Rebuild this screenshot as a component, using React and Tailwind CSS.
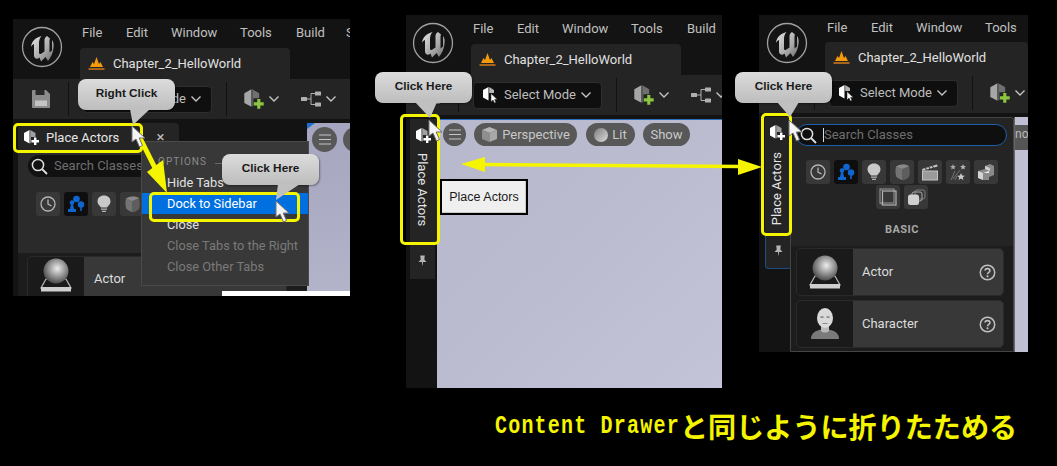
import React from "react";

const Chevron = ({ className = "" }) => (
  <svg width="12" height="8" viewBox="0 0 12 8" className={`shrink-0 ${className}`}>
    <path d="M1.5 1.5 L6 6 L10.5 1.5" fill="none" stroke="#c4c4c4" strokeWidth="1.4" />
  </svg>
);

const Logo = () => (
  <svg width="42" height="42" viewBox="0 0 42 42">
    <defs>
      <linearGradient id="ug" x1="0" y1="0" x2="1" y2="1">
        <stop offset="0" stopColor="#e4e4e4" />
        <stop offset="0.6" stopColor="#a8a8a8" />
        <stop offset="1" stopColor="#6a6a6a" />
      </linearGradient>
    </defs>
    <circle cx="21" cy="21" r="19.5" fill="#141414" stroke="#a0a0a0" strokeWidth="1.3" />
    <path
      d="M10 21 C10.5 15 15 11.5 20.5 10 C18.5 12.5 18 14.5 18 17 L18 26.5 C18 28 19 28.5 20.5 27.5 L23.5 25.5 L23.5 14 C23.5 12 24.5 11 26 10 L29 12.5 L28.5 14 L28.5 26.5 L31 24.5 L31 14 C32.5 16 33 18 32.5 22 C32 27 30 31 27 35 L24.5 31 L20 35.5 L18.5 31.5 C16 34 13.5 32.5 13 30 L13 18 C11.5 18.5 10.5 19.5 10 21 Z"
      fill="url(#ug)"
    />
  </svg>
);

const Flame = () => (
  <svg width="17" height="15" viewBox="0 0 17 15" className="shrink-0">
    <path d="M2 11 L4.5 6 L6 8 L8.5 1 L11 8 L12.5 6 L15 11 Z" fill="#f59a0c" />
    <rect x="0.5" y="12" width="16" height="2" fill="#a8641a" />
  </svg>
);

const PlaceIcon = ({ green = false, size = 17 }) => (
  <svg width={size} height={size} viewBox="0 0 17 17" className="shrink-0">
    <path d="M1 4 L6.5 1 L6.5 14.5 L1 11.5 Z" fill={green ? "#a6a6a6" : "#ffffff"} />
    <path d="M7.2 1 L12.5 4 L12.5 8 L8 8 L8 14 L7.2 14.5 Z" fill={green ? "#707070" : "#a0a0a0"} />
    <path d="M11 8.5 h2.4 v2.6 h2.6 v2.4 h-2.6 v2.6 h-2.4 v-2.6 h-2.6 v-2.4 h2.6 Z" fill={green ? "#8cc63f" : "#ffffff"} />
  </svg>
);

const SelectIcon = () => (
  <svg width="17" height="18" viewBox="0 0 17 18" className="shrink-0">
    <path d="M1 4 L6.5 1 L6.5 14.5 L1 11.5 Z" fill="#ffffff" />
    <path d="M7.2 1 L12 4 L12 7 L7.2 7 Z" fill="#b5b5b5" />
    <path d="M9 7.5 L9 16 L11 14 L12.5 17 L14 16.3 L12.6 13.5 L15.2 13.5 Z" fill="#ffffff" stroke="#222" strokeWidth="0.5" />
  </svg>
);

const BlueprintIcon = () => (
  <svg width="21" height="16" viewBox="0 0 21 16" className="shrink-0">
    <rect x="0" y="6" width="6" height="4" rx="0.6" fill="#b0b0b0" />
    <rect x="14" y="0.5" width="6" height="4" rx="0.6" fill="#b0b0b0" />
    <rect x="14" y="11.5" width="6" height="4" rx="0.6" fill="#b0b0b0" />
    <path d="M6 8 H10 M14 2.5 H10 V13.5 H14" fill="none" stroke="#b0b0b0" strokeWidth="1" />
  </svg>
);

const SaveIcon = () => (
  <svg width="18" height="18" viewBox="0 0 18 18" className="shrink-0">
    <path d="M0 1 Q0 0 1 0 H14 L18 4 V17 Q18 18 17 18 H1 Q0 18 0 17 Z" fill="#8c8c8c" />
    <rect x="3.5" y="0" width="9" height="5" fill="#2a2a2a" />
    <rect x="3" y="10.5" width="12" height="5.5" fill="#c4c4c4" />
  </svg>
);

const Hamburger = () => (
  <svg width="12" height="11" viewBox="0 0 12 11">
    <path d="M0 1 H12 M0 5.5 H12 M0 10 H12" stroke="#c4c4c4" strokeWidth="1.1" />
  </svg>
);

const SearchIcon = () => (
  <svg width="17" height="17" viewBox="0 0 17 17" className="shrink-0">
    <circle cx="7" cy="7" r="5.6" fill="none" stroke="#e0e0e0" strokeWidth="1.5" />
    <path d="M11 11 L16 16" stroke="#e0e0e0" strokeWidth="1.8" />
  </svg>
);

const HelpIcon = () => (
  <svg width="17" height="17" viewBox="0 0 16 16" className="shrink-0">
    <circle cx="8" cy="8" r="6.8" fill="none" stroke="#c0c0c0" strokeWidth="1.4" />
    <path d="M5.7 6.2 C5.8 3.7 10.3 3.7 10.3 6.3 C10.3 8 8 7.8 8 9.6" fill="none" stroke="#c0c0c0" strokeWidth="1.5" />
    <circle cx="8" cy="11.6" r="1" fill="#c0c0c0" />
  </svg>
);

const Pin = () => (
  <svg width="9" height="12" viewBox="0 0 9 12">
    <path d="M2.2 0.5 H6.8 L6.3 4.5 L8.5 7 H5.1 L4.5 11.5 L3.9 7 H0.5 L2.7 4.5 Z" fill="#b4b4b4" />
  </svg>
);

const Sphere = () => (
  <svg width="32" height="34" viewBox="0 0 32 34">
    <defs>
      <radialGradient id="sph" cx="0.55" cy="0.4" r="0.6">
        <stop offset="0" stopColor="#ededed" />
        <stop offset="0.5" stopColor="#9d9d9d" />
        <stop offset="1" stopColor="#4c4c4c" />
      </radialGradient>
    </defs>
    <path d="M6 21 L1 30 H31 L26 21 Z" fill="none" stroke="#b9b9b9" strokeWidth="1.2" />
    <rect x="1" y="29" width="30" height="4.5" fill="#cfcfcf" />
    <circle cx="16" cy="13" r="12.5" fill="url(#sph)" />
  </svg>
);

const Person = () => (
  <svg width="30" height="32" viewBox="0 0 30 32">
    <path d="M1 31 C1 24 7 22.5 11 21.5 H19 C23 22.5 29 24 29 31 Z" fill="#7a7a7a" />
    <path d="M11 17 H19 V23 C17 25 13 25 11 23 Z" fill="#b8b8b8" />
    <ellipse cx="15" cy="10" rx="8" ry="10" fill="#d9d9d9" />
    <rect x="10.5" y="8.5" width="3" height="1.2" fill="#666" />
    <rect x="16.5" y="8.5" width="3" height="1.2" fill="#666" />
    <rect x="12.5" y="15" width="5" height="1" fill="#888" />
  </svg>
);

const paletteGlyph = {
  clock: (
    <svg width="16" height="16" viewBox="0 0 16 16">
      <circle cx="8" cy="8" r="7" fill="none" stroke="#b5b5b5" strokeWidth="1.3" />
      <path d="M8 3.5 V8 L11.5 10" fill="none" stroke="#b5b5b5" strokeWidth="1.3" />
    </svg>
  ),
  actors: (
    <svg width="18" height="18" viewBox="0 0 18 18">
      <circle cx="9.5" cy="4" r="3.3" fill="#0f66d0" />
      <circle cx="14" cy="9.5" r="3.2" fill="#0f66d0" />
      <path d="M14 12 V16" stroke="#0f66d0" strokeWidth="1.6" />
      <circle cx="5" cy="7.5" r="2.3" fill="#0f66d0" />
      <path d="M4 9 H6 L7 14 H9 V17 H1 V14 H3 Z" fill="#0f66d0" />
    </svg>
  ),
  light: (
    <svg width="14" height="18" viewBox="0 0 14 18">
      <path d="M7 0.5 C11 0.5 13.5 3 13.5 6.5 C13.5 9 11.5 10.5 10 12.5 H4 C2.5 10.5 0.5 9 0.5 6.5 C0.5 3 3 0.5 7 0.5 Z" fill="#c9c9c9" />
      <rect x="4" y="13.5" width="6" height="1.3" fill="#b0b0b0" />
      <rect x="5" y="15.7" width="4" height="1.3" fill="#b0b0b0" />
    </svg>
  ),
  cube: (
    <svg width="17" height="18" viewBox="0 0 17 18">
      <path d="M2 3.5 Q8 0 15 3 Q16.5 10 15 14 Q10 18 8 17 Q3 15 2 13 Q1 8 2 3.5 Z" fill="#5e5e5e" />
      <path d="M2 3.5 Q8 0 15 3 L8 6 Z" fill="#8a8a8a" />
      <path d="M2 3.5 L8 6 V17 Q3 15 2 13 Q1 8 2 3.5 Z" fill="#737373" />
    </svg>
  ),
  film: (
    <svg width="18" height="18" viewBox="0 0 18 18">
      <rect x="1.5" y="8" width="15" height="9" fill="#9a9a9a" stroke="#c4c4c4" strokeWidth="1" />
      <path d="M1 6 L16 1.5 L16.7 3.4 L1.5 7.8 Z" fill="#c4c4c4" />
      <path d="M4.5 5 L5.4 7 M8 4 L8.9 6 M11.5 3 L12.4 5" stroke="#333" strokeWidth="1" />
    </svg>
  ),
  stars: (
    <svg width="18" height="18" viewBox="0 0 18 18">
      <path d="M12 10 L13.1 12.4 L15.8 12.7 L13.8 14.4 L14.4 17 L12 15.6 L9.6 17 L10.2 14.4 L8.2 12.7 L10.9 12.4 Z" fill="#c9c9c9" />
      <path d="M4 1 L4.8 3 L7 3.2 L5.3 4.5 L5.8 6.6 L4 5.5 L2.2 6.6 L2.7 4.5 L1 3.2 L3.2 3 Z" fill="#a8a8a8" />
      <path d="M14 1 L14.8 3 L17 3.2 L15.3 4.5 L15.8 6.6 L14 5.5 L12.2 6.6 L12.7 4.5 L11 3.2 L13.2 3 Z" fill="#b8b8b8" />
      <path d="M2 17 L6 8 M4 16 L11 7 M6 17 L8 13" stroke="#7a7a7a" strokeWidth="0.9" />
    </svg>
  ),
  shapes: (
    <svg width="18" height="18" viewBox="0 0 18 18">
      <path d="M8 3 L13 1 L17 3 V12 L12 14 V17 H6 L1 15 V8 L8 6 Z" fill="#8a8a8a" />
      <path d="M1 8 L6 10 V17 L1 15 Z" fill="#d4d4d4" />
      <path d="M6 10 L12 8 V10 H6 Z" fill="#eeeeee" />
      <path d="M8 3 L13 5 V8 L8 6 Z" fill="#d0d0d0" />
    </svg>
  ),
  volume: (
    <svg width="18" height="18" viewBox="0 0 18 18">
      <rect x="1" y="1" width="14" height="14" fill="none" stroke="#8a8a8a" strokeWidth="1.2" />
      <rect x="3.5" y="3" width="13.5" height="14" fill="none" stroke="#b5b5b5" strokeWidth="1.2" />
      <path d="M1 15 L3.5 17 M1 1 L3.5 3" stroke="#8a8a8a" />
    </svg>
  ),
  stack: (
    <svg width="19" height="17" viewBox="0 0 19 17">
      <rect x="8" y="1" width="10" height="9" rx="2" fill="none" stroke="#7a7a7a" strokeWidth="1" />
      <rect x="5" y="3" width="10" height="9" rx="2" fill="none" stroke="#a8a8a8" strokeWidth="1" />
      <rect x="1" y="5.5" width="11" height="10.5" rx="2.5" fill="#d0d0d0" />
    </svg>
  ),
};

const PaletteBtn = ({ k, active }) => (
  <div className={`w-6 h-6 rounded-[3px] flex items-center justify-center shrink-0 ${active ? "bg-[#0e0e0e]" : "bg-[#383838]"}`}>
    {paletteGlyph[k]}
  </div>
);

const MENU = [
  ["File", "w-[44px]"],
  ["Edit", "w-[45px]"],
  ["Window", "w-[69px]"],
  ["Tools", "w-[56px]"],
  ["Build", "w-[50px]"],
];

const Header = ({ logoClass, colClass, menuClass, tabW = "w-[210px]", hClass = "h-[60px]", menu = MENU }) => (
  <div className={`flex shrink-0 ${hClass}`}>
    <div className={`shrink-0 pt-[7px] ${logoClass}`}>
      <Logo />
    </div>
    <div className={`shrink-0 ${colClass}`}>
      <div className={`flex items-center pl-[2px] text-[13px] text-[#c0c0c0] whitespace-nowrap overflow-hidden ${menuClass}`}>
        {menu.map(([m, w]) => (
          <span key={m} className={`shrink-0 ${w}`}>{m}</span>
        ))}
      </div>
      <div className={`h-[31px] bg-[#242424] rounded-t-[4px] flex items-center pl-[8px] gap-[8px] text-[13px] text-[#e0e0e0] ${tabW}`}>
        <Flame />
        <span>Chapter_2_HelloWorld</span>
      </div>
    </div>
  </div>
);

const Toolbar = ({ padClass }) => (
  <div className={`h-[40px] shrink-0 bg-[#242424] flex items-center overflow-hidden ${padClass}`}>
    <div className="w-[55px] flex items-center pl-[19px] shrink-0"><SaveIcon /></div>
    <div className="w-px h-[34px] bg-[#111] mr-[14px] shrink-0" />
    <div className="w-[129px] h-[27px] bg-[#0f0f0f] rounded-[4px] border border-[#2e2e2e] flex items-center pl-[8px] text-[13px] text-[#bdbdbd] shrink-0">
      <SelectIcon />
      <span className="ml-[5px] whitespace-nowrap">Select Mode</span>
      <Chevron className="ml-[4px]" />
    </div>
    <div className="w-px h-[34px] bg-[#111] ml-[14px] mr-[16px] shrink-0" />
    <PlaceIcon green size={22} />
    <Chevron className="ml-[3px]" />
    <div className="ml-[21px] shrink-0"><BlueprintIcon /></div>
    <Chevron className="ml-[3px]" />
  </div>
);

const Callout = ({ cls, text, tail }) => (
  <div className={`absolute w-[97px] h-[31px] z-30 ${cls}`}>
    <div className="absolute inset-0 pb-[2px] rounded-[8px] bg-gradient-to-b from-[#dcdcdc] to-[#bdbdbd] flex items-center justify-center text-[11.8px] font-bold text-[#1a1a1a] font-['Liberation_Sans',sans-serif] shadow-[1px_1px_2px_rgba(0,0,0,0.4)]">
      {text}
    </div>
    <svg className="absolute left-0 top-0 overflow-visible" width="97" height="31">
      <polygon points={tail} fill="#c0c0c0" />
    </svg>
  </div>
);

const Cursor = ({ cls }) => (
  <svg className={`absolute z-40 ${cls}`} width="16" height="24" viewBox="0 0 16 24">
    <path d="M1 1 L1 17 L5 14 L8.5 22 L11.5 20.5 L8.2 13 L14 13 Z" fill="#f4f4f4" stroke="#707070" strokeWidth="1" />
  </svg>
);

const Highlight = ({ cls }) => (
  <div className={`absolute z-20 border-[3px] border-[#f5f500] rounded-[5px] ${cls}`} />
);

const Sidebar = ({ tabClass, pinClass, border, textClass }) => (
  <div className="shrink-0 flex flex-col items-start">
    <div className={`bg-[#242424] flex flex-col items-center ${tabClass}`}>
      <PlaceIcon />
      <span className={`text-[13px] text-[#e4e4e4] whitespace-nowrap [writing-mode:vertical-rl] ${textClass}`}>Place Actors</span>
    </div>
    <div className={`bg-[#242424] flex justify-center pt-[11px] ${pinClass} ${border ? "border-l border-b border-[#1d4f85] rounded-bl-[4px]" : ""}`}>
      <Pin />
    </div>
  </div>
);

const Pill = ({ cls = "", children }) => (
  <div className={`rounded-full bg-[#585858] flex items-center justify-center text-[13px] text-[#c8c8c8] shrink-0 ${cls}`}>
    {children}
  </div>
);

const ActorRow = ({ thumb, name }) => (
  <div className="h-[48px] w-[208px] rounded-[5px] bg-[#383838] border border-[#2a2a2a] flex items-center overflow-hidden shrink-0">
    <div className="w-[56px] h-full bg-[#1a1a1a] flex items-center justify-center shrink-0">{thumb}</div>
    <span className="ml-[9px] flex-1 text-[13px] text-[#dcdcdc]">{name}</span>
    <div className="mr-[7px]"><HelpIcon /></div>
  </div>
);

const MenuItem = ({ children, cls = "text-[#e0e0e0]" }) => (
  <div className={`h-[21px] flex items-center pl-[25px] text-[12.8px] whitespace-nowrap ${cls}`}>{children}</div>
);

const Panel1 = () => (
  <div className="absolute left-[13px] top-[19px] w-[337px] h-[277px] bg-[#131313] overflow-hidden flex flex-col">
    <Header
      logoClass="w-[67px] pl-[8px]"
      colClass="w-[270px]"
      menuClass="h-[29px] pb-[2px]"
      menu={[...MENU, ["Select", "w-[50px]"]]}
    />
    <Toolbar padClass="" />
    <div className="flex flex-1 min-h-0 pt-[4px]">
      <div className="w-[294px] flex flex-col shrink-0 pl-[5px]">
        <div className="h-[29px] flex shrink-0">
          <div className="w-[124px] bg-[#242424] rounded-tl-[4px] flex items-center pl-[5px] gap-[6px] text-[13px] text-[#e6e6e6]">
            <PlaceIcon />
            <span>Place Actors</span>
          </div>
          <div className="w-[37px] bg-[#242424] rounded-tr-[4px] flex items-center justify-center text-[15px] text-[#bdbdbd]">×</div>
        </div>
        <div className="flex-1 bg-[#2a2a2a] flex flex-col overflow-hidden">
          <div className="pl-[10px] pt-[3px]">
            <div className="h-[22px] w-[200px] bg-[#111] rounded-full flex items-center pl-[3px] gap-[6px] text-[13px] text-[#6e6e6e]">
              <SearchIcon />
              <span>Search Classes</span>
            </div>
          </div>
          <div className="flex gap-[4px] pl-[18px] pt-[15px]">
            <PaletteBtn k="clock" />
            <PaletteBtn k="actors" active />
            <PaletteBtn k="light" />
            <PaletteBtn k="cube" />
          </div>
          <div className="mt-[37px] flex-1 bg-[#1c1c1c] pl-[9px] pt-[3px]">
            <div className="h-[48px] w-[260px] rounded-[5px] bg-[#383838] border border-[#2a2a2a] flex items-start overflow-hidden">
              <div className="w-[56px] h-full bg-[#1a1a1a] flex justify-center pt-[1px] shrink-0"><Sphere /></div>
              <span className="ml-[10px] mt-[12px] text-[13px] text-[#dcdcdc]">Actor</span>
            </div>
          </div>
        </div>
      </div>
      <div className="flex-1 bg-gradient-to-b from-[#a5a5bf] to-[#b3b3ca] pt-[4px] pl-[5px] flex items-start gap-[6px] relative">
        <svg width="8" height="6" viewBox="0 0 8 6" className="absolute left-0 top-0">
          <polygon points="0,0 8,0 0,6" fill="#1f6fd0" />
        </svg>
        <Pill cls="w-[25px] h-[25px]"><Hamburger /></Pill>
        <Pill cls="w-[25px] h-[25px]" />
      </div>
    </div>
  </div>
);

const Panel2 = () => (
  <div className="absolute left-[406px] top-[15px] w-[316px] h-[373px] bg-[#131313] overflow-hidden flex flex-col">
    <Header logoClass="w-[65px] pl-[6px]" colClass="w-[251px]" menuClass="h-[29px] pb-[2px]" />
    <Toolbar padClass="ml-[-3px]" />
    <div className="flex flex-1 min-h-0 pt-[4px]">
      <div className="w-[31px] pl-[4px] shrink-0">
        <Sidebar tabClass="w-[27px] h-[125px] pt-[8px]" pinClass="w-[25px] h-[35px]" textClass="mt-[9px] mr-[2px]" />
      </div>
      <div className="flex-1 bg-gradient-to-br from-[#b8b8cc] via-[#bcbcd0] to-[#c4c4d8] border-t border-[#2a6fc0] flex flex-col">
        <div className="flex items-center pt-[3px] pl-[6px]">
          <Pill cls="w-[23px] h-[23px]"><Hamburger /></Pill>
          <Pill cls="w-[103px] h-[23px] ml-[8px]">
            <svg width="17" height="17" viewBox="0 0 17 17" className="mr-[4px]">
              <path d="M1 4 L8.5 1 L16 4 L8.5 7 Z" fill="#b5b5b5" />
              <path d="M1 4 L8.5 7 V16 L1 13 Z" fill="#8e8e8e" />
              <path d="M16 4 L8.5 7 V16 L16 13 Z" fill="#a8a8a8" />
            </svg>
            Perspective
          </Pill>
          <Pill cls="w-[49px] h-[23px] ml-[9px]">
            <span className="w-[14px] h-[14px] rounded-full bg-gradient-to-br from-[#7c7c7c] to-[#dedede] mr-[4px]" />
            Lit
          </Pill>
          <Pill cls="w-[47px] h-[23px] ml-[8px]">Show</Pill>
        </div>
        <div className="ml-[3px] mt-[33px] w-[88px] h-[36px] bg-[#efefef] border-2 border-black flex items-center justify-center text-[12.5px] text-[#1a1a1a] font-['Liberation_Sans',sans-serif] shadow-[inset_-1px_-1px_0_#c9c9c9]">
          Place Actors
        </div>
      </div>
    </div>
  </div>
);

const Panel3 = () => (
  <div className="absolute left-[759px] top-[15px] w-[269px] h-[337px] bg-[#131313] overflow-hidden flex flex-col">
    <Header
      logoClass="w-[66px] pl-[7px]"
      colClass="w-[203px]"
      menuClass="h-[27px] pb-[2px]"
      tabW="w-[203px]"
      hClass="h-[58px]"
      menu={MENU.slice(0, 4)}
    />
    <Toolbar padClass="" />
    <div className="flex flex-1 min-h-0 pt-[4px]">
      <div className="w-[31px] pl-[6px] shrink-0">
        <Sidebar tabClass="w-[25px] h-[117px] pt-[7px]" pinClass="w-[25px] h-[35px]" textClass="mt-[11px] mr-[2px] rotate-180" border />
      </div>
      <div className="w-[224px] bg-[#242424] border border-[#444] rounded-t-[3px] flex flex-col shrink-0 overflow-hidden">
        <div className="px-[5px] pt-[6px]">
          <div className="h-[22px] w-[211px] bg-[#0f0f0f] border border-[#1a5fa8] rounded-full flex items-center pl-[3px] text-[13px] text-[#6e6e6e]">
            <SearchIcon />
            <span className="w-px h-[14px] bg-[#dcdcdc] ml-[6px]" />
            <span>Search Classes</span>
          </div>
        </div>
        <div className="pt-[14px] flex flex-wrap justify-center gap-x-[4px] gap-y-[1px] px-[7px]">
          {["clock", "actors", "light", "cube", "film", "stars", "shapes", "volume", "stack"].map((k) => (
            <PaletteBtn key={k} k={k} active={k === "actors"} />
          ))}
        </div>
        <div className="h-[37px] pt-[5px] flex items-center justify-center text-[11px] font-bold text-[#a8a8a8] tracking-[0.5px] shrink-0">BASIC</div>
        <div className="flex-1 bg-[#1c1c1c] pl-[5px] pt-[2px] flex flex-col gap-[4px]">
          <ActorRow thumb={<Sphere />} name="Actor" />
          <ActorRow thumb={<Person />} name="Character" />
        </div>
      </div>
      <div className="flex-1 bg-[#c0c0d4] border-l border-[#666] flex flex-col">
        <div className="h-[8px]" />
        <div className="h-[25px] bg-[#555] text-[12px] text-[#bbb] overflow-hidden whitespace-nowrap">no</div>
      </div>
    </div>
  </div>
);

const Arrows = () => (
  <svg className="absolute left-0 top-0 z-10" width="1057" height="466" viewBox="0 0 1057 466">
    <path d="M141 140 L157 172" stroke="#f5f500" strokeWidth="5" fill="none" />
    <polygon points="167,193 147,172 163,160" fill="#f5f500" />
    <path d="M480 164.5 L742 166.5" stroke="#f5f500" strokeWidth="3.5" fill="none" />
    <polygon points="461,164 485,157 485,172" fill="#f5f500" />
    <polygon points="762,167 738,159 738,175" fill="#f5f500" />
  </svg>
);

export default function App() {
  return (
    <div className="relative w-[1057px] h-[466px] bg-black overflow-hidden font-['Roboto',sans-serif]">
      <Panel1 />
      <Panel2 />
      <Panel3 />

      <div className="absolute z-[5] left-[141px] top-[141px] w-[168px] h-[145px] bg-[#383838] border border-[#4a4a4a] flex flex-col">
        <div className="h-[30px] flex items-end pb-[3px] pl-[16px] text-[10px] tracking-[1px] text-[#8a8a8a]">
          OPTIONS
          <span className="ml-[8px] mb-[5px] w-[90px] h-px bg-[#666]" />
        </div>
        <MenuItem>Hide Tabs</MenuItem>
        <MenuItem cls="bg-[#0070e0] text-white">Dock to Sidebar</MenuItem>
        <MenuItem>Close</MenuItem>
        <MenuItem cls="text-[#7a7a7a]">Close Tabs to the Right</MenuItem>
        <MenuItem cls="text-[#7a7a7a]">Close Other Tabs</MenuItem>
      </div>
      <div className="absolute z-[6] left-[222px] top-[291px] w-[128px] h-[5px] bg-white" />

      <Arrows />

      <Highlight cls="left-[13px] top-[123px] w-[130px] h-[30px]" />
      <Highlight cls="left-[149px] top-[192px] w-[151px] h-[30px]" />
      <Highlight cls="left-[400px] top-[114px] w-[40px] h-[131px]" />
      <Highlight cls="left-[761px] top-[113px] w-[31px] h-[123px]" />

      <Callout cls="left-[78px] top-[79px]" text="Right Click" tail="52,30 72,30 55,46" />
      <Callout cls="left-[222px] top-[154px]" text="Click Here" tail="56,30 78,30 54,46" />
      <Callout cls="left-[375px] top-[72px]" text="Click Here" tail="40,30 62,30 55,46" />
      <Callout cls="left-[735px] top-[72px]" text="Click Here" tail="42,30 64,30 55,45" />

      <Cursor cls="left-[131px] top-[125px]" />
      <Cursor cls="left-[275px] top-[200px]" />
      <Cursor cls="left-[428px] top-[119px]" />
      <Cursor cls="left-[788px] top-[119px]" />

      <div className="absolute left-[495px] top-[409px] flex items-center text-[#f5f500] font-bold whitespace-nowrap">
        <span className="w-[185px] font-['Liberation_Mono',monospace] text-[20px] tracking-[1.2px] inline-block scale-y-[1.3] origin-center">Content Drawer</span>
        <span className="text-[28.1px] leading-[34px] font-['Noto_Sans_CJK_JP',sans-serif]">と同じように折りたためる</span>
      </div>
    </div>
  );
}
